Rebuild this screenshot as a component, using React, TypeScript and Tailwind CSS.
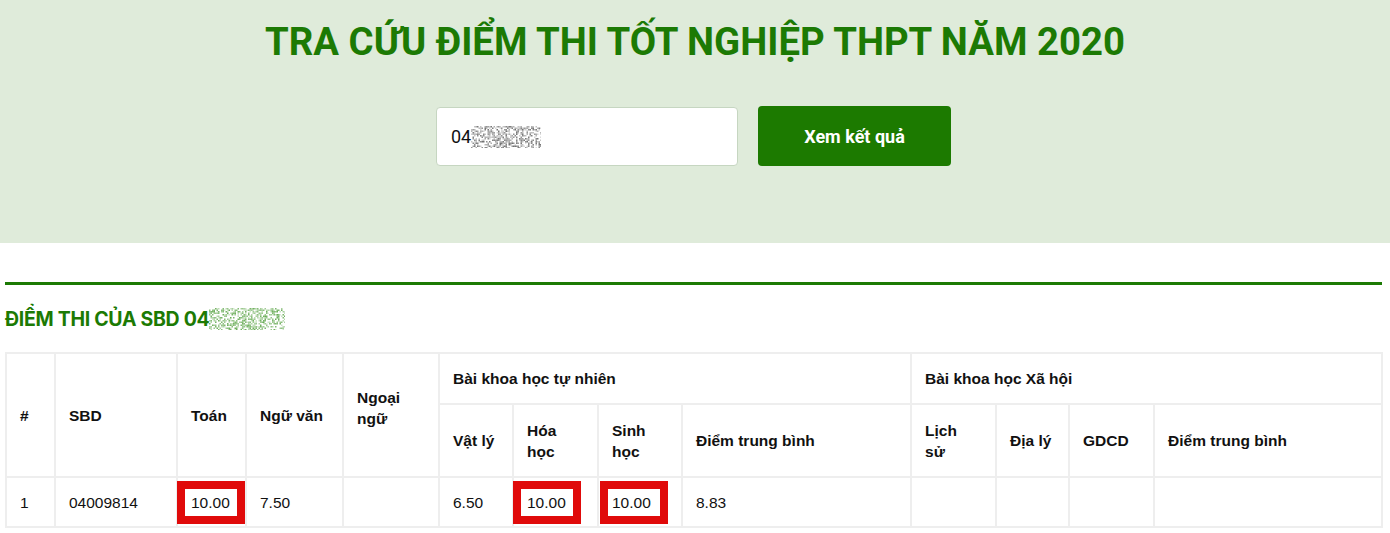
import React from "react";

function Noise({ w, h, color, seed }: { w: number; h: number; color: string; seed: number }) {
  const rects: React.ReactElement[] = [];
  let s = seed;
  const rnd = () => {
    s = (s * 9301 + 49297) % 233280;
    return s / 233280;
  };
  for (let y = 0; y < h; y += 1.5) {
    for (let x = 0; x < w; x += 1.5) {
      const r = rnd();
      const edge = Math.min(x, w - x) / w;
      if (r < 0.45 + edge * 0.4) {
        rects.push(
          <rect key={`${x}-${y}`} x={x} y={y} width={1.5} height={1.5} fill={color} opacity={0.15 + rnd() * 0.55} />
        );
      }
    }
  }
  return (
    <svg width={w} height={h} viewBox={`0 0 ${w} ${h}`} className="inline-block">
      {rects}
    </svg>
  );
}

function Score({ v, shift = 0 }: { v: string; shift?: number }) {
  return (
    <span className="relative inline-block">
      {v}
      <span
        className="pointer-events-none absolute -top-[11px] -bottom-[11px] -left-[14px] -right-[15px] border-[8px] border-[#e00a0a]"
        style={shift ? { transform: `translateX(${shift}px)` } : undefined}
      />
    </span>
  );
}

export default function App() {
  const th = "border-2 border-[#eeeeee] pl-[13px] pr-[8px] text-left align-middle font-bold";
  const td = "border-2 border-[#eeeeee] pl-[13px] pr-[8px] h-[50px] align-middle";
  return (
    <div className="min-h-[533px] bg-white">
      <div className="h-[243px] bg-[#dfebda] pt-[14px]">
        <h1
          className="text-center text-[38.3px] font-bold leading-[56px] text-[#1c7a04]"
          style={{ fontFamily: "Roboto, sans-serif" }}
        >
          TRA CỨU ĐIỂM THI TỐT NGHIỆP THPT NĂM 2020
        </h1>
        <div className="mt-[37px] flex justify-center gap-[20px] pr-[3px]">
          <div
            className="flex h-[59px] w-[302px] items-center rounded-[4px] border border-[#c6d6c1] bg-white px-[14px] text-[18px] text-[#111]"
            style={{ fontFamily: "Roboto, sans-serif" }}
          >
            <span>04</span>
            <Noise w={70} h={22} color="#333" seed={7} />
          </div>
          <button
            className="h-[60px] w-[193px] -mt-[1px] rounded-[4px] bg-[#1c7a00] text-[18px] font-bold text-white"
            style={{ fontFamily: "Roboto, sans-serif" }}
          >
            Xem kết quả
          </button>
        </div>
      </div>
      <div className="px-[5px] pr-[8px]">
        <div className="mt-[39px] h-[3px] bg-[#1c7a04]" />
        <h2
          className="mt-[22px] flex items-center text-[19.5px] font-bold leading-[24px] tracking-[-0.3px] text-[#1c7a04]"
          style={{ fontFamily: "Inter, sans-serif" }}
        >
          ĐIỂM THI CỦA SBD 04
          <Noise w={76} h={22} color="#2a8a10" seed={13} />
        </h2>
        <table
          className="mt-[21px] w-[1376px] table-fixed border-collapse text-[15.5px] leading-[21px] text-[#111]"
          style={{ fontFamily: "'Liberation Sans', Arial, sans-serif" }}
        >
          <colgroup>
            <col className="w-[49px]" />
            <col className="w-[122px]" />
            <col className="w-[69px]" />
            <col className="w-[97px]" />
            <col className="w-[96px]" />
            <col className="w-[74px]" />
            <col className="w-[85px]" />
            <col className="w-[84px]" />
            <col className="w-[229px]" />
            <col className="w-[85px]" />
            <col className="w-[73px]" />
            <col className="w-[85px]" />
            <col className="w-[228px]" />
          </colgroup>
          <thead>
            <tr className="h-[51px]">
              <th rowSpan={2} className={th}>#</th>
              <th rowSpan={2} className={th}>SBD</th>
              <th rowSpan={2} className={th}>Toán</th>
              <th rowSpan={2} className={th}>Ngữ văn</th>
              <th rowSpan={2} className={`${th} pb-[14px]`}>Ngoại<br />ngữ</th>
              <th colSpan={4} className={th}>Bài khoa học tự nhiên</th>
              <th colSpan={4} className={th}>Bài khoa học Xã hội</th>
            </tr>
            <tr className="h-[73px]">
              <th className={th}>Vật lý</th>
              <th className={th}>Hóa<br />học</th>
              <th className={th}>Sinh<br />học</th>
              <th className={th}>Điểm trung bình</th>
              <th className={th}>Lịch<br />sử</th>
              <th className={`${th} whitespace-nowrap`}>Địa lý</th>
              <th className={th}>GDCD</th>
              <th className={th}>Điểm trung bình</th>
            </tr>
          </thead>
          <tbody>
            <tr>
              <td className={td}>1</td>
              <td className={td}>04009814</td>
              <td className={td}><Score v="10.00" /></td>
              <td className={td}>7.50</td>
              <td className={td}></td>
              <td className={td}>6.50</td>
              <td className={td}><Score v="10.00" /></td>
              <td className={td}><Score v="10.00" shift={2} /></td>
              <td className={td}>8.83</td>
              <td className={td}></td>
              <td className={td}></td>
              <td className={td}></td>
              <td className={td}></td>
            </tr>
          </tbody>
        </table>
      </div>
    </div>
  );
}
